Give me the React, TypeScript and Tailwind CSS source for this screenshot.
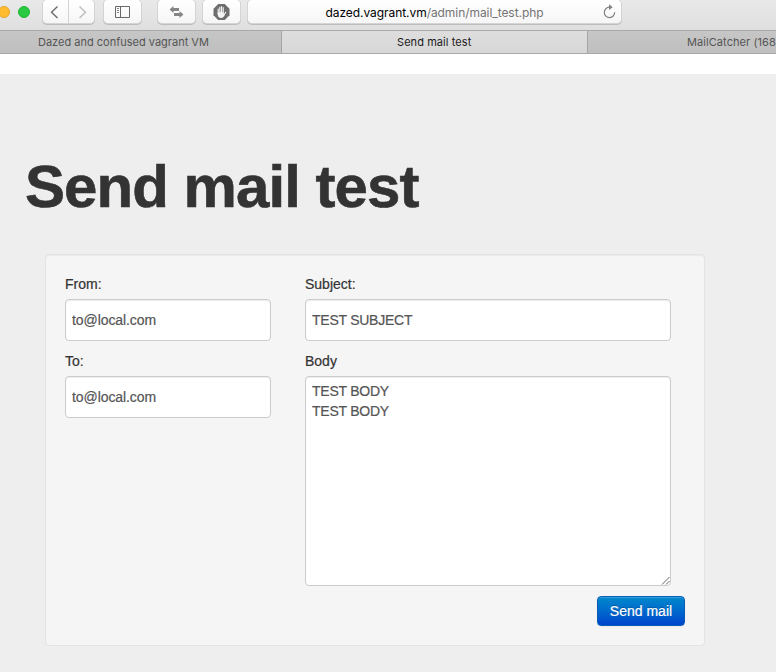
import React from "react";

const button =
  "flex h-[23px] items-center justify-center rounded-[4px] bg-gradient-to-b from-white to-[#f6f6f6] shadow-[0_0_0_1px_#d4d4d4,0_1px_0_1px_#bdbdbd]";
const label = "mb-[5px] h-5 text-[14px] leading-5 text-[#333] whitespace-nowrap [-webkit-text-stroke:0.2px_#333]";
const field =
  "block rounded-[4px] border border-[#ccc] bg-white px-[6px] text-[14px] leading-5 text-[#555] outline-none shadow-[inset_0_1px_1px_rgba(0,0,0,0.075)] [-webkit-text-stroke:0.2px_#555]";

function Toolbar() {
  return (
    <div className="flex h-[30px] w-full bg-gradient-to-b from-[#e9e9e9] to-[#dfdfdf]">
      <div className="-ml-[2px] mt-[6px] h-3 w-3 shrink-0 rounded-full border border-[#e5a52a] bg-[#ffbd2e]" />
      <div className="ml-2 mt-[6px] h-3 w-3 shrink-0 rounded-full border border-[#1fb536] bg-[#28ca41]" />
      <div className="ml-[13px] flex">
        <div className={`${button} w-[25px] rounded-r-none pr-[3px] pt-px`}>
          <svg width="10" height="14" viewBox="0 0 10 14" fill="none" stroke="#6c6c6c" strokeWidth="1.4"><path d="M8.5 1.5 2.5 7.3 8.5 13" /></svg>
        </div>
        <div className={`${button} ml-px w-[25px] rounded-l-none pl-[2px] pt-px`}>
          <svg width="10" height="14" viewBox="0 0 10 14" fill="none" stroke="#bcbcbc" strokeWidth="1.4"><path d="M1.5 1.5 7.5 7.3 1.5 13" /></svg>
        </div>
      </div>
      <div className={`${button} ml-[10px] w-[37px] pt-[2px]`}>
        <svg width="15" height="13" viewBox="0 0 15 13" fill="none" stroke="#686868"><path d="M.5.5h14v11H.5zM5.5.5v11" /><path d="M2 2.5h2M2 4.5h2M2 6.5h2" stroke="#858585" /></svg>
      </div>
      <div className={`${button} ml-[17px] w-[37px] pt-px`}>
        <svg width="15" height="12" viewBox="0 0 15 12" fill="#858585"><path d="M.5 3.5 4.5 0v2H10v3H4.5v2zM14.5 8.5 10.5 5v2H5v3h5.5v2z" /></svg>
      </div>
      <div className={`${button} ml-[8px] w-[37px] pt-px`}>
        <svg width="17" height="16" viewBox="0 0 17 16">
          <path d="M5.2 0h6.6l4.7 4.8v6.4L11.8 16H5.2L.5 11.2V4.8z" fill="#6e6e6e" />
          <g fill="none" stroke="#f4f4f4" strokeLinecap="round" strokeWidth="1.15"><path d="M5.2 5v5M6.8 3.2V9M8.5 2.5V9M10.2 3.5V9M12.7 8.3 11 11" /></g>
          <path d="M4.7 8.3h6v1.5l1.1.6-.8 1.9Q10.2 14 8.3 14 4.7 14 4.7 10z" fill="#f4f4f4" />
        </svg>
      </div>
      <div className={`${button} relative ml-[8px] w-[373px] font-[Inter,sans-serif] text-[12px] tracking-[-0.06px] text-[#747474]`}>
        <span className="mt-[2px] whitespace-nowrap"><span className="text-black">dazed.vagrant.vm</span>/admin/mail_test.php</span>
        <svg className="absolute right-[5px] top-[4px]" width="14" height="15" viewBox="0 0 14 15" fill="none" stroke="#808080" strokeWidth="1.2"><path d="M7.5 3.2A5.2 5.2 0 1 0 12.7 8.3" /><path d="m7 .3 3.7 2.9L7 6z" fill="#808080" stroke="none" /></svg>
      </div>
    </div>
  );
}

function Tabs() {
  return (
    <div className="flex h-6 border-y border-[#a9a9a9] font-[Inter,sans-serif] text-[11px] leading-[22px] text-[#555]">
      <div className="flex w-[282px] shrink-0 border-r border-[#a5a5a5] bg-gradient-to-b from-[#c6c6c6] to-[#bfbfbf] pl-[38px]">
        <span className="whitespace-nowrap">Dazed and confused vagrant VM</span>
      </div>
      <div className="flex w-[306px] shrink-0 border-r border-[#a5a5a5] bg-gradient-to-b from-[#dedede] to-[#d7d7d7] pl-[115px] text-[#1a1a1a]">
        <span className="whitespace-nowrap tracking-[0.07px]">Send mail test</span>
      </div>
      <div className="flex min-w-0 flex-1 overflow-hidden bg-gradient-to-b from-[#c6c6c6] to-[#bfbfbf] pl-[99px]">
        <span className="whitespace-nowrap tracking-[0.07px]">MailCatcher (168</span>
      </div>
    </div>
  );
}

export default function App() {
  return (
    <div className="h-[672px] w-[776px] overflow-hidden bg-white font-['Liberation_Sans',Arial,sans-serif]">
      <Toolbar />
      <Tabs />
      <main className="mt-5 h-[598px] bg-[#eee] pt-[83px]">
        <h1 className="ml-[25px] whitespace-nowrap text-[60px] font-bold leading-[60px] tracking-[-0.95px] text-[#333] [-webkit-text-stroke:0.6px_#333]">Send mail test</h1>
        <form className="ml-[45px] mt-[37px] h-[392px] w-[660px] rounded-[4px] border border-[#e3e3e3] bg-[#f5f5f5] p-[19px] shadow-[inset_0_1px_1px_rgba(0,0,0,0.05)]">
          <div className="flex gap-[34px]">
            <div className="w-[206px]">
              <div className={label}>From:</div>
              <input className={`${field} mb-[10px] h-[42px] w-full tracking-[-0.08px]`} defaultValue="to@local.com" />
              <div className={label}>To:</div>
              <input className={`${field} h-[42px] w-full tracking-[-0.08px]`} defaultValue="to@local.com" />
            </div>
            <div className="w-[366px]">
              <div className={label}>Subject:</div>
              <input className={`${field} mb-[10px] h-[42px] w-full tracking-[-0.25px]`} defaultValue="TEST SUBJECT" />
              <div className={label}>Body</div>
              <div className="relative">
                <textarea className={`${field} h-[210px] w-full resize-none py-1 tracking-[-0.25px]`} defaultValue={"TEST BODY\nTEST BODY"} />
                <svg className="absolute bottom-[1px] right-[1px]" width="9" height="9" viewBox="0 0 9 9" stroke="#666"><path d="M1 8.5 8.5 1M5 8.5 8.5 5" /></svg>
              </div>
            </div>
          </div>
          <div className="mt-[10px] flex justify-end">
            <button type="button" className="h-[30px] w-[88px] whitespace-nowrap rounded-[4px] border border-[#0a5cb8] bg-gradient-to-b from-[#0088cc] to-[#0044cc] text-[14px] leading-5 text-white shadow-[inset_0_1px_0_rgba(255,255,255,0.2),0_1px_2px_rgba(0,0,0,0.05)] [-webkit-text-stroke:0.2px_white] [text-shadow:0_-1px_0_rgba(0,0,0,0.25)]">Send mail</button>
          </div>
        </form>
      </main>
    </div>
  );
}
